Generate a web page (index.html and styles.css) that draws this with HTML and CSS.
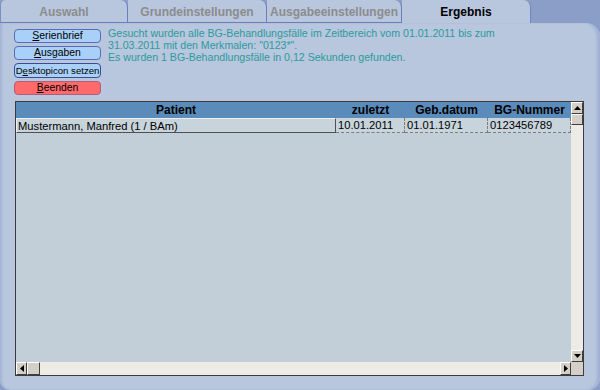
FILE: index.html
```html
<!DOCTYPE html>
<html lang="de">
<head>
    <meta charset="UTF-8">
    <title>Ergebnis</title>
    <link rel="stylesheet" href="styles.css">
</head>
<body>
    <div class="window">
        <div class="tabs">
            <div class="tab tab-first">Auswahl</div>
            <div class="tab tab-2">Grundeinstellungen</div>
            <div class="tab tab-3">Ausgabeeinstellungen</div>
            <div class="tab active">Ergebnis</div>
        </div>

        <div class="panel">
            <div class="top">
                <div class="buttons">
                    <button class="btn"><u>S</u>erienbrief</button>
                    <button class="btn"><u>A</u>usgaben</button>
                    <button class="btn default">D<u>e</u>sktopicon setzen</button>
                    <button class="btn red"><u>B</u>eenden</button>
                </div>
                <p class="info">Gesucht wurden alle BG-Behandlungsfälle im Zeitbereich vom 01.01.2011 bis zum<br>31.03.2011 mit den Merkmalen: "0123*".<br>Es wurden 1 BG-Behandlungsfälle in 0,12 Sekunden gefunden.</p>
            </div>

            <div class="grid">
                <div class="data">
                    <div class="row head">
                        <div>Patient</div>
                        <div>zuletzt</div>
                        <div>Geb.datum</div>
                        <div>BG-Nummer</div>
                    </div>
                    <div class="row line">
                        <div class="focus">Mustermann, Manfred (1 / BAm)</div>
                        <div>10.01.2011</div>
                        <div>01.01.1971</div>
                        <div>0123456789</div>
                    </div>
                </div>

                <!-- vertical scrollbar -->
                <div class="vscroll">
                    <div class="sbtn">
                        <svg width="7" height="4" viewBox="0 0 7 4"><path d="M3.5 0 L7 4 L0 4 Z" fill="#000"/></svg>
                    </div>
                    <div class="thumb"></div>
                    <div class="track"></div>
                    <div class="sbtn">
                        <svg width="7" height="4" viewBox="0 0 7 4"><path d="M0 0 L7 0 L3.5 4 Z" fill="#000"/></svg>
                    </div>
                </div>

                <!-- horizontal scrollbar -->
                <div class="hscroll">
                    <div class="sbtn">
                        <svg width="4" height="7" viewBox="0 0 4 7"><path d="M4 0 L4 7 L0 3.5 Z" fill="#000"/></svg>
                    </div>
                    <div class="thumb"></div>
                    <div class="track"></div>
                    <div class="sbtn">
                        <svg width="4" height="7" viewBox="0 0 4 7"><path d="M0 0 L4 3.5 L0 7 Z" fill="#000"/></svg>
                    </div>
                </div>
                <div class="corner"></div>
            </div>
        </div>
    </div>
</body>
</html>
```

FILE: styles.css
```css
/* General styles */
body {
    margin: 0;
    padding: 0;
    font-family: "Liberation Sans", Arial, sans-serif;
    background-color: #8a9ec8;
}

.window {
    width: 600px;
    height: 390px;
    display: flex;
    flex-direction: column;
}

/* Tabs */
.tabs {
    display: flex;
    height: 23px;
}

.tab {
    box-sizing: border-box;
    height: 23px;
    background-color: #b8c6de;
    color: #8c8c8c;
    font-size: 12px;
    font-weight: bold;
    text-align: center;
    line-height: 24px;
    border-right: 1px solid #6c7cbc;
    border-bottom: 1px solid #6c7cbc;
    border-top-right-radius: 7px;
}

.tab-first {
    width: 128px;
    border-top-left-radius: 5px;
    border-left: 1px solid #7e8ec4;
}

.tab-2 {
    width: 139px;
}

.tab-3 {
    width: 135px;
}

.tab.active {
    width: 129px;
    color: #000;
    border-bottom: none;
    border-right-color: #7484c0;
}

/* Panel */
.panel {
    flex: 1;
    display: flex;
    flex-direction: column;
    background-color: #b8c6de;
    border-radius: 0 14px 12px 10px;
    box-shadow: inset 3px 0 2px -1px #a4b4d6, inset -4px 0 3px -1px #a0b0d4;
    padding: 6px 16px 14px 14px;
}

.top {
    display: flex;
    gap: 7px;
}

.buttons {
    display: flex;
    flex-direction: column;
    gap: 3px;
    width: 87px;
    flex-shrink: 0;
}

.btn {
    height: 14px;
    padding: 0;
    overflow: visible;
    font-family: "Liberation Sans", Arial, sans-serif;
    font-size: 10.4px;
    line-height: 12px;
    white-space: nowrap;
    color: #000;
    background-color: #a8d0f8;
    border: 1px solid #5c6cb4;
    border-radius: 4px;
}

.btn.default {
    height: 15px;
    font-size: 9.6px;
    border-color: #3c4c94;
}

.btn.red {
    background-color: #ff6b6b;
    border-color: #b45c7c;
}

.info {
    margin: -2px 0 0;
    font-size: 10.6px;
    line-height: 12px;
    color: #2a9c9c;
}

/* Grid */
.grid {
    flex: 1;
    margin: 6px 0 0 1px;
    display: grid;
    grid-template-columns: 1fr 12px;
    grid-template-rows: 1fr 13px;
    border: 1px solid #3c3c3c;
    background-color: #c2cfd9;
}

.row {
    display: grid;
    grid-template-columns: 320px 69px 83px 83px;
}

.head {
    height: 16px;
    background-color: #5a8bba;
    font-size: 12px;
    font-weight: bold;
    text-align: center;
    line-height: 16px;
}

.line {
    height: 15px;
    font-size: 11.2px;
    line-height: 14px;
    background-color: #c8d4dc;
}

.line div {
    box-sizing: border-box;
    padding-left: 2px;
    border-right: 1px dashed #7c7c7c;
    border-bottom: 1px dashed #7c7c7c;
    white-space: nowrap;
    overflow: hidden;
}

.line .focus {
    border: 1px solid #505050;
    border-top-color: #f0f0f0;
    border-left-color: #f0f0f0;
    padding-left: 1px;
}

/* Scrollbars */
.vscroll,
.hscroll {
    display: flex;
    background-color: #ecebe6;
}

.vscroll {
    flex-direction: column;
}

.sbtn,
.thumb,
.corner {
    box-sizing: border-box;
    background-color: #d4d0c8;
    border: 1px solid #404040;
    border-top-color: #fff;
    border-left-color: #fff;
}

.sbtn {
    display: flex;
    align-items: center;
    justify-content: center;
}

.vscroll .sbtn {
    height: 12px;
}

.vscroll .thumb {
    height: 11px;
}

.hscroll .sbtn {
    width: 11px;
}

.hscroll .thumb {
    width: 13px;
}

.track {
    flex: 1;
}

.corner {
    border: none;
}
```
